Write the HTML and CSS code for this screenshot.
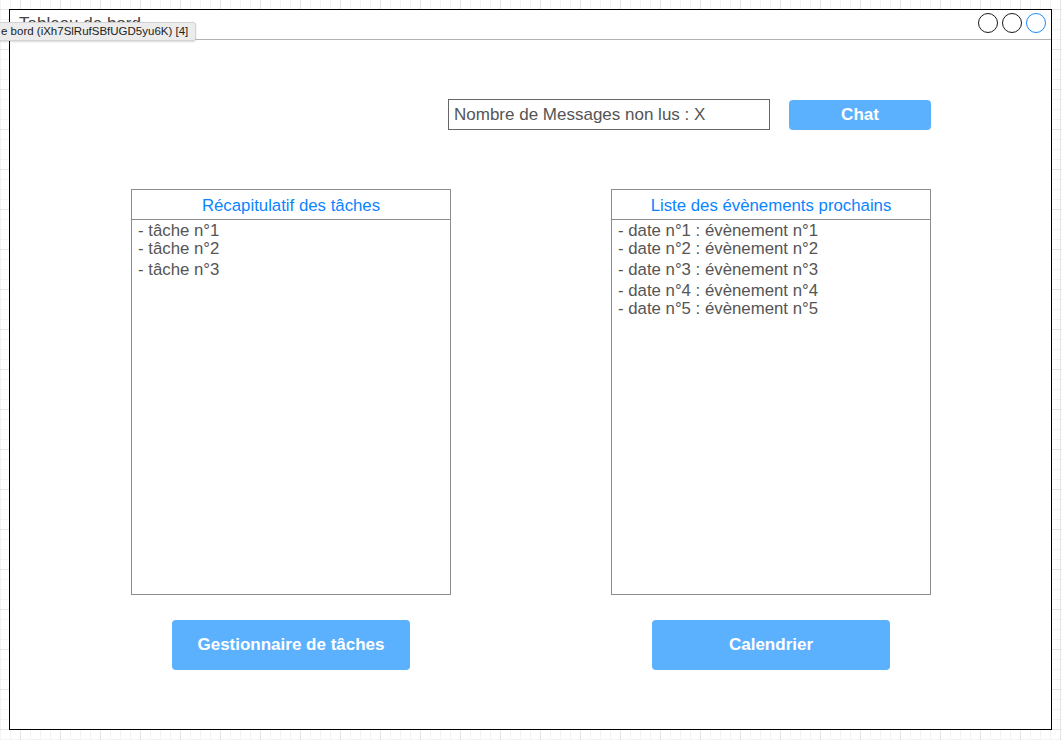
FILE: index.html
```html
<!DOCTYPE html>
<html lang="fr">
<head>
<meta charset="utf-8">
<title>Tableau de bord</title>
<link rel="stylesheet" href="styles.css">
</head>
<body>
<div class="frame">
  <div class="titlebar">
    <span class="title">Tableau de bord</span>
    <div class="winbtns">
      <span class="circle"></span>
      <span class="circle"></span>
      <span class="circle blue"></span>
    </div>
  </div>
  <div class="content">
    <div class="toprow">
      <div class="msgbox">Nombre de Messages non lus : X</div>
      <div class="btn chat">Chat</div>
    </div>
    <div class="columns">
      <div class="col">
        <div class="panel">
          <div class="panel-head">Récapitulatif des tâches</div>
          <ul class="items">
            <li>- tâche n°1</li>
            <li>- tâche n°2</li>
            <li class="gap">- tâche n°3</li>
          </ul>
        </div>
        <div class="btn big">Gestionnaire de tâches</div>
      </div>
      <div class="col">
        <div class="panel">
          <div class="panel-head">Liste des évènements prochains</div>
          <ul class="items">
            <li>- date n°1 : évènement n°1</li>
            <li>- date n°2 : évènement n°2</li>
            <li class="gap">- date n°3 : évènement n°3</li>
            <li class="gap">- date n°4 : évènement n°4</li>
            <li>- date n°5 : évènement n°5</li>
          </ul>
        </div>
        <div class="btn big">Calendrier</div>
      </div>
    </div>
  </div>
</div>
<div class="tooltip">e bord (iXh7SlRufSBfUGD5yu6K) [4]</div>
</body>
</html>
```
FILE: styles.css
```css
html, body {
  margin: 0;
  padding: 0;
}
body {
  width: 1062px;
  height: 740px;
  overflow: hidden;
  font-family: "Liberation Sans", Arial, sans-serif;
  background-color: #ffffff;
  background-image:
    linear-gradient(to right, #e4e4e4 1px, transparent 1px),
    linear-gradient(to bottom, #e4e4e4 1px, transparent 1px),
    linear-gradient(to right, #f3f3f3 1px, transparent 1px),
    linear-gradient(to bottom, #f3f3f3 1px, transparent 1px);
  background-size: 40px 40px, 40px 40px, 10px 10px, 10px 10px;
  background-position: 20px 9px, 20px 9px, 0 9px, 0 9px;
  position: relative;
}
.frame {
  box-sizing: border-box;
  margin: 9px 0 0 9px;
  width: 1043px;
  height: 721px;
  border: 1px solid #000;
  background: #fff;
  display: flex;
  flex-direction: column;
}
.titlebar {
  height: 29px;
  border-bottom: 1px solid #b3b3b3;
  display: flex;
  align-items: center;
  justify-content: space-between;
  padding: 0 5px 0 9px;
}
.title {
  font-size: 17px;
  color: #444;
  margin-top: -2px;
}
.winbtns {
  display: flex;
  gap: 4px;
  margin-top: -3px;
}
.circle {
  box-sizing: border-box;
  width: 20px;
  height: 20px;
  border: 1.5px solid #1a1a1a;
  border-radius: 50%;
}
.circle.blue {
  border-color: #1a8cff;
}
.content {
  margin-left: 121px;
  width: 800px;
}
.toprow {
  display: flex;
  justify-content: flex-end;
  align-items: flex-start;
  gap: 19px;
  margin-top: 59px;
}
.msgbox {
  box-sizing: border-box;
  width: 322px;
  height: 31px;
  border: 1px solid #666;
  font-size: 17px;
  color: #555;
  padding-left: 5px;
  line-height: 29px;
}
.btn {
  background: #5cb1ff;
  color: #fff;
  font-weight: bold;
  font-size: 17px;
  border-radius: 4px;
  display: flex;
  align-items: center;
  justify-content: center;
}
.chat {
  width: 142px;
  height: 30px;
  margin-top: 1px;
}
.columns {
  display: flex;
  justify-content: space-between;
  margin-top: 59px;
}
.col {
  width: 320px;
  display: flex;
  flex-direction: column;
  align-items: center;
}
.panel {
  box-sizing: border-box;
  width: 320px;
  height: 406px;
  border: 1px solid #8c8c8c;
}
.panel-head {
  height: 29px;
  border-bottom: 1px solid #8c8c8c;
  color: #0a84ff;
  font-size: 16.8px;
  text-align: center;
  line-height: 31px;
}
.items {
  list-style: none;
  margin: 0;
  padding: 2px 0 0 6px;
  font-size: 16.8px;
  color: #555;
  line-height: 18px;
}
.items .gap {
  margin-top: 3px;
}
.big {
  width: 238px;
  height: 50px;
  margin-top: 25px;
}
.tooltip {
  position: absolute;
  left: -1px;
  top: 22px;
  height: 17px;
  padding: 0 7px 0 1px;
  background: #ececec;
  border: 1px solid #d2d2d2;
  border-radius: 0 3px 3px 0;
  box-shadow: 0 1px 2px rgba(0,0,0,0.15);
  font-size: 11.5px;
  line-height: 17px;
  color: #222;
}
```
